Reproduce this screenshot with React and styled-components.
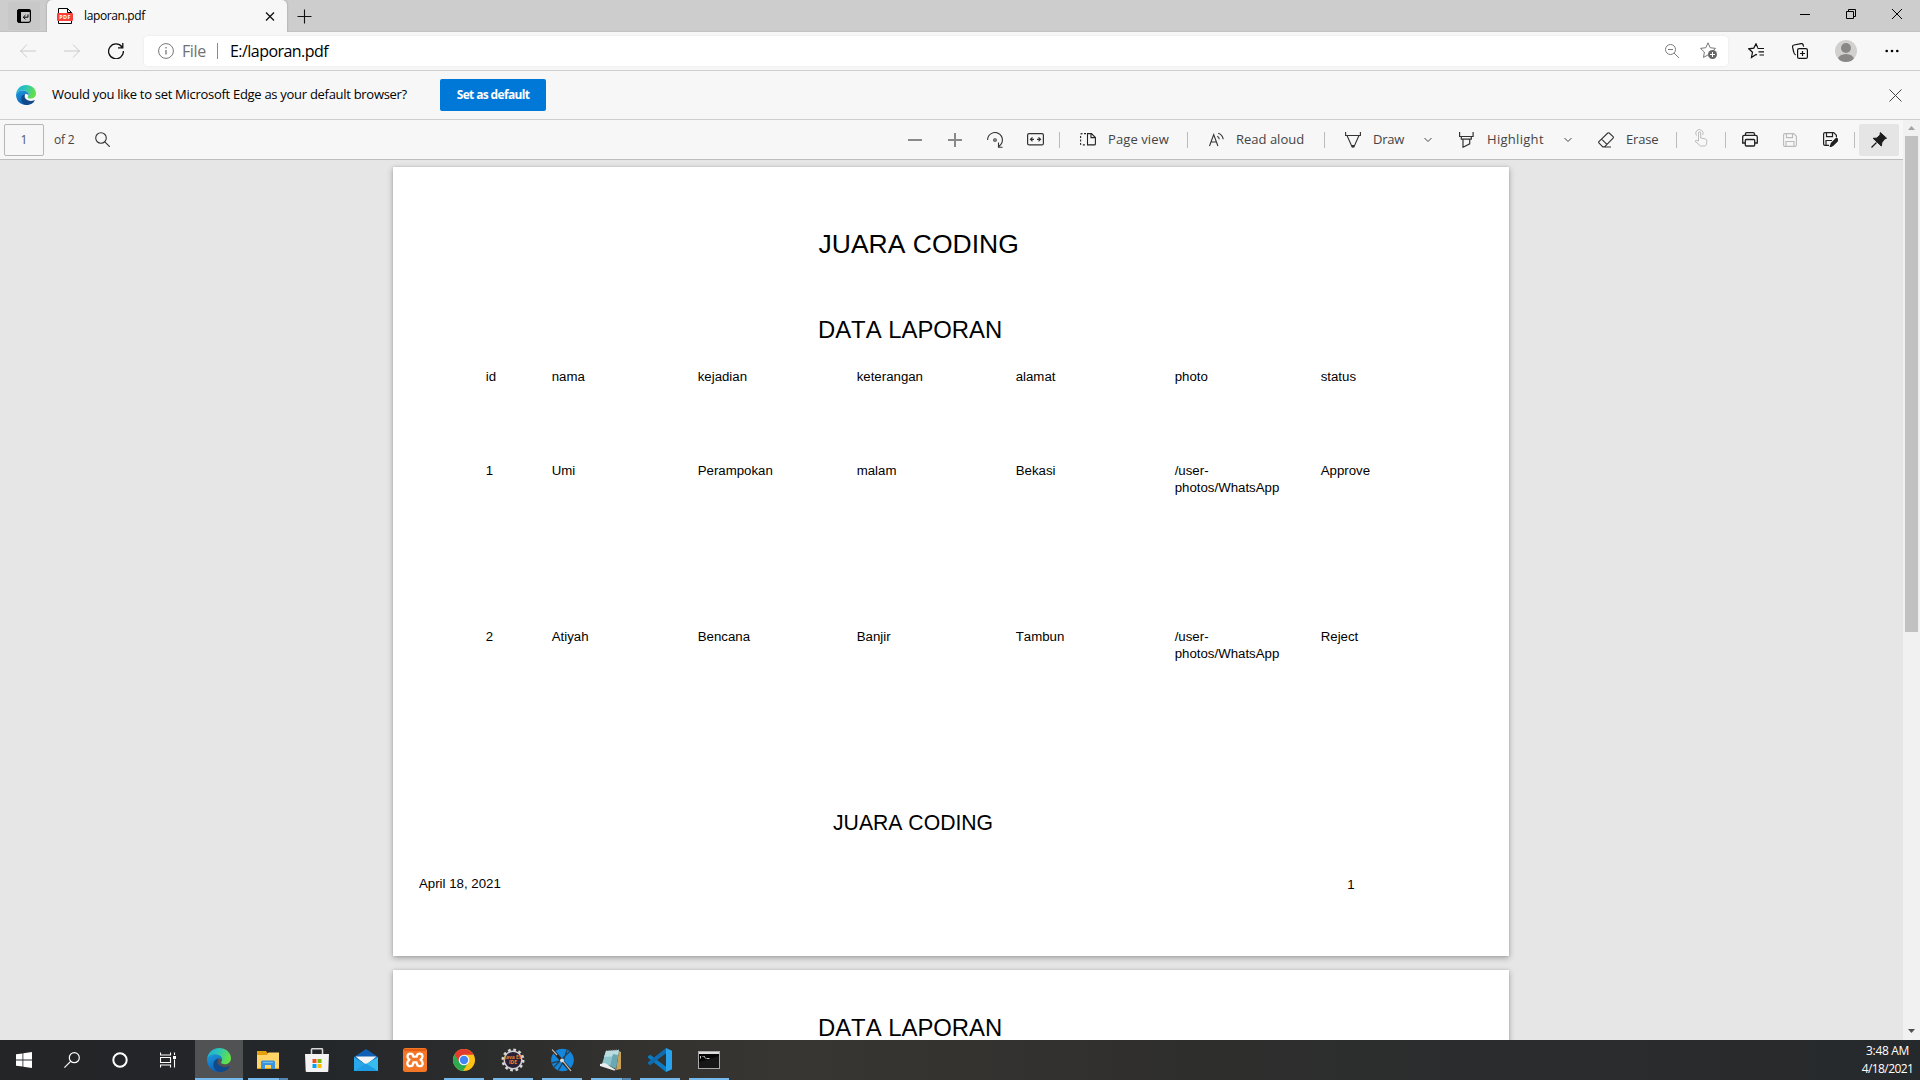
import React from "react";
import styled, { createGlobalStyle } from "styled-components";

const Global = createGlobalStyle`
  * { box-sizing: border-box; }
  html, body { margin: 0; padding: 0; overflow: hidden; }
  body { font-family: "Open Sans", "Noto Sans", sans-serif; color: #000; background: #e6e6e6; }
  svg { display: block; flex: none; }
`;

const Screen = styled.div`
  width: 1920px;
  height: 1080px;
  display: flex;
  flex-direction: column;
  overflow: hidden;
`;

const Spacer = styled.div`
  flex: 1;
`;

const Label = styled.span`
  display: block;
  flex: none;
  white-space: nowrap;
  width: ${(p) => (p.$w ? `${p.$w}px` : "auto")};
  margin-bottom: ${(p) => p.$lift || 0}px;
  font-size: ${(p) => p.$size || 13}px;
  line-height: 20px;
  letter-spacing: ${(p) => p.$ls || 0}px;
  color: ${(p) => p.$color || "#000"};
`;

const Cell = styled.div`
  width: ${(p) => p.$w}px;
  height: ${(p) => (p.$h ? `${p.$h}px` : "100%")};
  flex: none;
  display: flex;
  align-items: center;
  justify-content: center;
`;

/* Tab strip */
const TabStrip = styled.div`
  height: 32px;
  flex: none;
  display: flex;
  background: #cdcdcd;
  box-shadow: inset 0 -1px 0 #c2c2c2;
`;
const TabActions = styled.div`
  width: 32px;
  height: 28px;
  margin: 2px 7px 0 8px;
  border-radius: 3px;
  background: #c8c8c8;
  display: flex;
  align-items: center;
  justify-content: center;
`;
const Tab = styled.div`
  width: 240px;
  height: 32px;
  padding: 0 9px 0 10px;
  border-radius: 5px 5px 0 0;
  background: #f7f7f7;
  box-shadow: 0 0 2px rgba(0, 0, 0, 0.3);
  display: flex;
  align-items: center;
`;
const PdfBadge = styled.div`
  width: 16px;
  height: 16px;
  margin-right: 11px;
  display: grid;
  place-items: center;
  & > * { grid-area: 1 / 1; }
`;
const PdfBadgeText = styled.span`
  padding-top: 2px;
  font: 700 5.4px/8px "Open Sans", sans-serif;
  letter-spacing: 0.4px;
  color: #fff;
`;

/* Navigation bar */
const NavBar = styled.div`
  height: 39px;
  flex: none;
  display: flex;
  align-items: center;
  padding: 0 5px 1px 6px;
  background: #f7f7f7;
  border-bottom: 1px solid #cecece;
`;
const AddressBar = styled.div`
  width: 1584px;
  height: 30px;
  margin: 0 6px 0 6px;
  padding: 0 1px 0 14px;
  border-radius: 4px;
  background: #fff;
  box-shadow: 0 0 3px rgba(0, 0, 0, 0.07);
  display: flex;
  align-items: center;
`;
const UrlDivider = styled.div`
  width: 1px;
  height: 16px;
  margin: 0 12px 0 10px;
  background: #8a8a8a;
`;

/* Notification bar */
const InfoBar = styled.div`
  height: 49px;
  flex: none;
  display: flex;
  align-items: center;
  padding: 0 18px 0 16px;
  background: #f7f7f7;
  border-bottom: 1px solid #cecece;
`;
const InfoText = styled.div`
  width: 388px;
  margin-left: 16px;
`;
const PrimaryButton = styled.button`
  width: 106px;
  height: 32px;
  padding: 0;
  border: 0;
  border-radius: 2px;
  background: #0078d7;
  color: #fff;
  font: 700 12px/20px "Open Sans", sans-serif;
  letter-spacing: -0.65px;
`;

/* PDF viewer */
const Viewer = styled.div`
  flex: 1;
  min-height: 0;
  display: flex;
`;
const ViewerMain = styled.div`
  width: 1903px;
  display: flex;
  flex-direction: column;
  min-height: 0;
`;
const PdfBar = styled.div`
  height: 40px;
  flex: none;
  display: flex;
  align-items: center;
  padding: 0 4px;
  background: #f7f7f7;
  border-bottom: 1px solid #bdbdbd;
`;
const PageInput = styled.div`
  width: 40px;
  height: 32px;
  margin-right: 10px;
  border: 1px solid #b5b5b5;
  border-radius: 2px;
  display: flex;
  align-items: center;
  justify-content: center;
`;
const Divider = styled.div`
  width: 1px;
  height: 16px;
  margin: 0 4px;
  background: #bcbcbc;
`;
const ToolButton = styled.div`
  width: ${(p) => p.$w}px;
  padding-left: 16px;
  display: flex;
  align-items: center;
  gap: 12px;
`;
const Chevron = styled.div`
  width: ${(p) => p.$w}px;
  padding-left: 16px;
`;
const PinButton = styled.div`
  width: 40px;
  height: 32px;
  border-radius: 2px;
  background: #e5e5e5;
  display: flex;
  align-items: center;
  justify-content: center;
`;
const Canvas = styled.div`
  flex: 1;
  min-height: 0;
  overflow: hidden;
  padding: 7px 0 0 393px;
  background: #e6e6e6;
`;
const Page = styled.div`
  width: 1116px;
  height: 789px;
  margin-bottom: 14px;
  padding-top: ${(p) => p.$top}px;
  background: #fff;
  box-shadow: 0 2px 6px rgba(0, 0, 0, 0.3), 0 0 2px rgba(0, 0, 0, 0.12);
  font-family: "Liberation Sans", Arial, sans-serif;
  font-kerning: none;
`;
const Heading = styled.div`
  font-size: ${(p) => p.$size}px;
  line-height: ${(p) => p.$lh}px;
  padding-left: ${(p) => p.$left}px;
  margin-bottom: ${(p) => p.$gap || 0}px;
`;
const Row = styled.div`
  height: ${(p) => p.$h}px;
  padding-left: 92.7px;
  display: grid;
  grid-template-columns: 66px 146px 159px 159px 159px 146px 120px;
  font-size: 13.25px;
  line-height: 17px;
`;
const PageFooter = styled.div`
  display: flex;
  justify-content: space-between;
  padding: 0 154.5px 0 26px;
  font-size: 13.25px;
  line-height: 17px;
`;
const PageNumber = styled.span`
  padding-top: 1px;
`;

/* Scrollbar */
const Scrollbar = styled.div`
  width: 17px;
  background: #f1f1f1;
  display: flex;
  flex-direction: column;
  align-items: center;
`;
const Thumb = styled.div`
  width: 13px;
  height: 496px;
  background: #c1c1c1;
`;

/* Taskbar */
const Taskbar = styled.div`
  height: 40px;
  flex: none;
  display: flex;
  background: linear-gradient(90deg, #232527 0, #24272a 330px, #33322f 640px, #383632 800px, #2e2e2d 1200px, #292b2d 1700px, #26292b 1920px);
`;
const TaskGroup = styled.div`
  display: flex;
  gap: 1px;
  margin-left: 3px;
`;
const TaskItem = styled.div`
  width: 48px;
  height: 40px;
  display: flex;
  flex-direction: column;
  align-items: center;
  background: ${(p) => (p.$active ? "#505254" : "transparent")};
`;
const TaskIcon = styled.div`
  height: 38px;
  padding-top: 2px;
  display: flex;
  align-items: center;
`;
const Underline = styled.div`
  width: ${(p) => (p.$active ? 48 : 40)}px;
  height: 2px;
  background: ${(p) => (p.$stack ? "linear-gradient(90deg, #76b9ed 31px, #3f5f78 31px, #5687b0 32px)" : "#76b9ed")};
`;
const Clock = styled.div`
  width: 65px;
  padding-top: 2px;
  display: flex;
  flex-direction: column;
  align-items: center;
  font-size: 12px;
  line-height: 18px;
  color: #fff;
`;
const ClockLine = styled.span`
  letter-spacing: ${(p) => p.$ls}px;
`;

const Svg = ({ w = 16, h = w, c = "#222", sw = 1, children }) => (
  <svg width={w} height={h} viewBox={`0 0 ${w} ${h}`} fill="none" stroke={c} strokeWidth={sw}>
    {children}
  </svg>
);

const SmallChevron = () => (
  <Svg w={8} h={6} c="#444">
    <path d="M.5 1l3.500 3.500L7.500 1" />
  </Svg>
);

const EdgeLogo = ({ size, id }) => (
  <svg width={size} height={size} viewBox="0 0 24 24">
    <defs>
      <linearGradient id={`${id}a`} x1="0" y1="0" x2="1" y2=".3">
        <stop offset="0" stopColor="#1ca8dc" />
        <stop offset=".5" stopColor="#2cc5b8" />
        <stop offset="1" stopColor="#62e04a" />
      </linearGradient>
      <linearGradient id={`${id}b`} x1="0" y1="0" x2=".5" y2="1">
        <stop offset="0" stopColor="#1b9de2" />
        <stop offset="1" stopColor="#0f5cb0" />
      </linearGradient>
    </defs>
    <path d="M0 11.500C.6 5 5.500 0 12 0c7 0 12 4.900 12 10.200 0 4-3.200 6-6.300 6-2.600 0-3.700-.9-3.700-1.600 0-.6 1.100-1.200 1.100-3 0-2.600-3-4.900-6.900-4.900C4 6.700 1 8.500 0 11.500z" fill={`url(#${id}a)`} />
    <path d="M0 11.500c1-3.300 4.200-4.900 7.800-4.900 4.200 0 7.300 2.200 7.300 5 0 .5-.1.900-.2 1.200-.6-1.300-1.900-2.300-3.400-2.300-1.700 0-3 1.900-3 4.400 0 4.400 3.700 7.200 7.400 8.400-1.200.5-2.500.7-3.900.7C5 24 0 18.600 0 11.500z" fill={`url(#${id}b)`} />
    <path d="M11.500 10.500c-3.300.6-5.200 3-5.200 6 0 3.700 2.700 7.300 7.500 7.400 3.700-.1 6.900-2.100 8.600-5 .3-.5-.1-.8-.6-.6-1.200.6-2.600.8-4 .8-4.200 0-7.400-2.500-7.400-5.500 0-1.400.5-2.400 1.100-3.100z" fill="#114a8b" />
  </svg>
);

const taskIcons = {
  explorer: (
    <svg width="22" height="20" viewBox="0 0 22 20">
      <path d="M0 1h9l1.500 2H22v16H0z" fill="#e2a00c" />
      <path d="M0 5h10l1.500-2.500H22V18H0z" fill="#ffd567" />
      <path d="M4 19v-6.500c0-1.400.8-2 2-2h10c1.200 0 2 .6 2 2V19h-4v-4H8v4z" fill="#3b93dc" />
      <path d="M6 12h10v1H6z" fill="#74bdf0" />
    </svg>
  ),
  store: (
    <svg width="24" height="24" viewBox="0 0 24 24">
      <path d="M6.500 7V1.500q0-.7.7-.7h9.600q.7 0 .7.700V7" fill="none" stroke="#d8d8d8" strokeWidth="1.500" />
      <path d="M0 6h24l-.7 17.200q0 .8-1 .8H1.700q-1 0-1-.8z" fill="#f3f3f3" />
      <path d="M7.500 11h4v4h-4z" fill="#f25022" />
      <path d="M12.500 11h4v4h-4z" fill="#7fba00" />
      <path d="M7.500 16h4v4h-4z" fill="#00a4ef" />
      <path d="M12.500 16h4v4h-4z" fill="#ffb900" />
    </svg>
  ),
  mail: (
    <svg width="24" height="22" viewBox="0 0 24 22">
      <path d="M0 8l12-8 12 8v4H0z" fill="#0f5fb4" />
      <path d="M1.500 7.500h21L12 16z" fill="#f4f4f4" />
      <path d="M0 8l12 7.500V22H0z" fill="#28a8ea" />
      <path d="M24 8v14H0l12-7z" fill="#35bdf0" />
      <path d="M24 22H0l12-7.500z" fill="#1e9de4" />
    </svg>
  ),
  xampp: (
    <svg width="24" height="24" viewBox="0 0 24 24">
      <rect width="24" height="24" rx="2.500" fill="#f37726" />
      <path d="M1 1h22v2H1z" fill="#e25f14" />
      <path
        d="M10.200 8.700C10.200 6.200 8.800 5.600 7.400 5.600 5.600 5.600 4.500 6.800 4.500 8.500c0 1.600.9 2.500 2 3.200-1.300.8-2.200 1.800-2.200 3.500 0 1.800 1.200 3 3 3 1.900 0 2.900-1.200 2.900-3.400M13.800 8.700c0-2.500 1.400-3.100 2.800-3.100 1.800 0 2.900 1.200 2.900 2.900 0 1.600-.9 2.500-2 3.200 1.300.8 2.200 1.800 2.200 3.500 0 1.800-1.200 3-3 3-1.900 0-2.900-1.200-2.900-3.400M9.500 8.700h5M9.500 14.300h5"
        fill="none"
        stroke="#fff"
        strokeWidth="2.300"
        strokeLinejoin="round"
      />
    </svg>
  ),
  chrome: (
    <svg width="22" height="22" viewBox="0 0 22 22">
      <circle cx="11" cy="11" r="11" fill="#fbc116" />
      <path d="M1.500 5.500A11 11 0 0 1 20.600 5.700H11L6 13.500z" fill="#e33b2e" />
      <path d="M1.500 5.500A11 11 0 0 0 10 22l4.700-7.500-3.700 1-5-3z" fill="#2da94f" />
      <circle cx="11" cy="11" r="5.300" fill="#fff" />
      <circle cx="11" cy="11" r="4.200" fill="#4285f4" />
    </svg>
  ),
  draw: (
    <svg width="24" height="24" viewBox="0 0 24 24">
      <circle cx="12.500" cy="12" r="11.300" fill="#1487dc" />
      <path d="M3 20L20 3M8 23l5-9 4-12M2 15l12-3" stroke="#24445c" strokeWidth="1.300" fill="none" />
      <path d="M2 1.500L21 23" stroke="#2b2522" strokeWidth="3.200" />
      <path d="M2 1.500l5 5.500M12 12l9 11" stroke="#b9b5b0" strokeWidth="1.200" />
      <circle cx="12" cy="12.500" r="2" fill="#ddd" />
    </svg>
  ),
  notepad: (
    <svg width="24" height="22" viewBox="0 0 24 22">
      <path d="M20 2l2 1v17l-5 1z" fill="#c9a25a" />
      <path d="M7 2l13-1-3 17-14-3z" fill="#8ec6cd" />
      <path d="M7 2l13-1-1 6-14 1z" fill="#b9dde0" />
      <path d="M1 15l5-1 11 7-2 .5L1 17z" fill="#e8eeee" />
      <path d="M14 5l5 1-2 14-6-3z" fill="#6aa9b3" />
      <path d="M7 1.500l13-.8" stroke="#777" strokeDasharray="1 1" />
    </svg>
  ),
  vscode: (
    <svg width="24" height="24" viewBox="0 0 24 24">
      <path d="M0 8.300L2.200 6.800 18 18.800V24L0 9.800z" fill="#0b7cc4" />
      <path d="M0 15.700l2.200 1.500L18 5.200V0L0 14.200z" fill="#0f6cb0" />
      <path d="M18 0l6 2.700v18.600L18 24z" fill="#28a4ee" />
    </svg>
  ),
  cmd: (
    <svg width="22" height="18" viewBox="0 0 22 18">
      <rect x=".5" y=".5" width="21" height="17" fill="#060606" stroke="#aaa" />
      <path d="M1 1h20v2H1z" fill="#ddd" />
      <path d="M1 11L21 5v12H1z" fill="#fff" opacity=".07" />
      <path d="M2.500 5v2.500M4.500 5.500h1M6 5l1.500 2.500M8.500 7.500h3" stroke="#ddd" strokeWidth=".9" />
    </svg>
  ),
};

const GearBox = styled.div`
  width: 24px;
  height: 24px;
  display: grid;
  place-items: center;
  & > * { grid-area: 1 / 1; }
`;
const GearText = styled.span`
  font: 700 5px/5px "Open Sans", sans-serif;
  color: #f0872a;
  text-align: center;
  white-space: nowrap;
`;
const Gear = () => (
  <GearBox>
    <svg width="24" height="24" viewBox="0 0 24 24">
      <circle cx="12" cy="12" r="10.200" fill="none" stroke="#d8d8d8" strokeWidth="2.600" strokeDasharray="2.700 2.640" />
      <circle cx="12" cy="12" r="8.800" fill="#2b2038" stroke="#cfcfcf" strokeWidth="1.500" />
    </svg>
    <GearText>Java EE<br />IDE</GearText>
  </GearBox>
);

const running = [
  { key: "edge", icon: <EdgeLogo size={24} id="task" />, active: true, line: true },
  { key: "explorer", icon: taskIcons.explorer, line: true, stack: true },
  { key: "store", icon: taskIcons.store },
  { key: "mail", icon: taskIcons.mail },
  { key: "xampp", icon: taskIcons.xampp },
  { key: "chrome", icon: taskIcons.chrome, line: true },
  { key: "gear", icon: <Gear />, line: true },
  { key: "draw", icon: taskIcons.draw, line: true },
  { key: "notepad", icon: taskIcons.notepad, line: true, stack: true },
  { key: "vscode", icon: taskIcons.vscode, line: true },
  { key: "cmd", icon: taskIcons.cmd, line: true },
];

const rows = [
  { h: 94, cells: ["id", "nama", "kejadian", "keterangan", "alamat", "photo", "status"] },
  { h: 166, cells: ["1", "Umi", "Perampokan", "malam", "Bekasi", ["/user-", "photos/WhatsApp"], "Approve"] },
  { h: 183, cells: ["2", "Atiyah", "Bencana", "Banjir", "Tambun", ["/user-", "photos/WhatsApp"], "Reject"] },
];

const CellText = ({ value }) => (
  <div>{Array.isArray(value) ? value.map((line) => <div key={line}>{line}</div>) : value}</div>
);

export default function App() {
  return (
    <Screen>
      <Global />
      <TabStrip>
        <TabActions>
          <Svg w={14} c="#000">
            <rect x=".6" y=".6" width="12.800" height="12.800" rx="1.800" strokeWidth="1.200" />
            <path d="M1 1h2.500v12H1zM1 1h12v1.500H1z" fill="#000" />
            <path d="M11 5.500v2.700H6.500M8.500 6L6.300 8.200l2.200 2.200" />
          </Svg>
        </TabActions>
        <Tab>
          <PdfBadge>
            <Svg w={16}>
              <path d="M1.500 5V.5h9l4 4V15.500h-13V5M10.500.5v4h4" stroke="#000" fill="#fff" />
              <rect x="0" y="5" width="16" height="8" rx="1" fill="#f8403c" stroke="none" />
            </Svg>
            <PdfBadgeText>PDF</PdfBadgeText>
          </PdfBadge>
          <Label $size={12} $ls={-0.38}>laporan.pdf</Label>
          <Spacer />
          <Svg w={16} c="#111" sw={1.3}>
            <path d="M4 4.500l8 8M12 4.500l-8 8" />
          </Svg>
        </Tab>
        <Cell $w={35}>
          <Svg w={15} c="#111" sw={1.1}>
            <path d="M7.500 .5v14M.5 7.500h14" />
          </Svg>
        </Cell>
        <Spacer />
        <Cell $w={46} $h={28}>
          <Svg w={10} c="#000"><path d="M0 5.500h10" /></Svg>
        </Cell>
        <Cell $w={46} $h={28}>
          <Svg w={10} c="#000"><path d="M.5 2.500h7v7h-7zM2.500 2.500v-2h7v7h-2" /></Svg>
        </Cell>
        <Cell $w={46} $h={28}>
          <Svg w={10} c="#000"><path d="M0 0l10 10M10 0L0 10" /></Svg>
        </Cell>
      </TabStrip>

      <NavBar>
        <Cell $w={44}>
          <Svg w={16} c="#cacaca"><path d="M0 8h16M7 1.500L.7 8 7 14.500" /></Svg>
        </Cell>
        <Cell $w={44}>
          <Svg w={16} c="#cacaca"><path d="M0 8h16M9 1.500L15.300 8 9 14.500" /></Svg>
        </Cell>
        <Cell $w={44}>
          <Svg w={16} c="#111" sw={1.3}>
            <path d="M14 4A7.400 7.400 0 1 0 15.400 8M14.800 0v4.800H10" />
          </Svg>
        </Cell>
        <AddressBar>
          <Svg w={16} c="#777">
            <circle cx="8" cy="8" r="7.400" />
            <path d="M8 7v4.500M8 4v1.500" strokeWidth="1.300" />
          </Svg>
          <Cell $w={8} />
          <Label $size={16} $w={25} $ls={-0.4} $color="#717171">File</Label>
          <UrlDivider />
          <Label $size={16} $ls={-0.55}>E:/laporan.pdf</Label>
          <Spacer />
          <Cell $w={36}>
            <Svg w={14} c="#7b7b7b">
              <circle cx="5.500" cy="5.500" r="5" />
              <path d="M9 9l5 5M3 5.500h5" />
            </Svg>
          </Cell>
          <Cell $w={37}>
            <Svg w={18} h={18} c="#777">
              <path d="M8 .8l2.200 4.900 5.300.7-2.500 2.400M8 .8L5.800 5.700l-5.300.7 3.900 3.700-.9 5.300L8 12.900" />
              <circle cx="12.500" cy="12.500" r="4.500" fill="#666" stroke="none" />
              <path d="M12.500 10v5M10 12.500h5" stroke="#fff" />
            </Svg>
          </Cell>
        </AddressBar>
        <Cell $w={44}>
          <Svg w={17} h={16} c="#111" sw={1.2}>
            <path d="M9.500 5.500H16M10.500 8.800H16M11.500 12H16M9 12l-1-.6-4.500 3 1-5.200L.8 5.800l5-.7L8 .8l1.800 4" />
          </Svg>
        </Cell>
        <Cell $w={44}>
          <Svg w={16} c="#111" sw={1.2}>
            <rect x="5.600" y="5.600" width="9.800" height="9.800" rx="1.500" />
            <path d="M10.500 8v5M8 10.500h5M3.800 12C2.500 11.500 2 10.500 1.700 9L.6 4.200C.4 3 .8 2.200 2 2l7-1.400c1.200-.2 2 .3 2.200 1.500l.4 1.500" />
          </Svg>
        </Cell>
        <Cell $w={47}>
          <svg width="22" height="22" viewBox="0 0 22 22">
            <defs><clipPath id="avatar"><circle cx="11" cy="11" r="11" /></clipPath></defs>
            <g clipPath="url(#avatar)">
              <rect width="22" height="22" fill="#d2d0ce" />
              <circle cx="11" cy="8" r="5" fill="#8a8886" />
              <ellipse cx="11" cy="19.500" rx="8" ry="5.500" fill="#8a8886" />
            </g>
          </svg>
        </Cell>
        <Cell $w={46}>
          <svg width="14" height="4" viewBox="0 0 14 4">
            <circle cx="1.700" cy="2" r="1.300" /><circle cx="7" cy="2" r="1.300" /><circle cx="12.300" cy="2" r="1.300" />
          </svg>
        </Cell>
      </NavBar>

      <InfoBar>
        <EdgeLogo size={20} id="info" />
        <InfoText>
          <Label $size={13} $lift={2} $ls={-0.29}>Would you like to set Microsoft Edge as your default browser?</Label>
        </InfoText>
        <PrimaryButton>Set as default</PrimaryButton>
        <Spacer />
        <Svg w={13} c="#444"><path d="M.5 .5l12 12M12.500 .5l-12 12" /></Svg>
      </InfoBar>

      <Viewer>
        <ViewerMain>
          <PdfBar>
            <PageInput><Label $size={12} $color="#555">1</Label></PageInput>
            <Label $size={12} $w={31} $ls={-0.2} $color="#444">of 2</Label>
            <Cell $w={34} $h={36}>
              <Svg w={15} c="#333" sw={1.1}>
                <circle cx="6" cy="6" r="5.300" />
                <path d="M9.800 9.800l5 5" />
              </Svg>
            </Cell>
            <Spacer />
            <Cell $w={40}><Svg w={14} c="#8a8a8a" sw={2}><path d="M0 7h14" /></Svg></Cell>
            <Cell $w={40}><Svg w={14} c="#8a8a8a" sw={2}><path d="M0 7h14M7 0v14" /></Svg></Cell>
            <Cell $w={40}>
              <Svg w={16} c="#333" sw={1.1}>
                <path d="M.6 8A7.400 7.400 0 1 1 12 14.200M11.500 10.500v4.700h4" />
                <circle cx="8" cy="8" r="1.300" />
              </Svg>
            </Cell>
            <Cell $w={40}>
              <Svg w={17} h={13} c="#333" sw={1.2}>
                <rect x=".6" y=".6" width="15.800" height="11.300" rx="1.500" />
                <path d="M3.500 6.300H7M10 6.300h3.500M5.500 4.300l-2 2 2 2M11.500 4.300l2 2-2 2" />
              </Svg>
            </Cell>
            <Divider />
            <ToolButton $w={119}>
              <Svg w={16} h={13} c="#222" sw={1.1}>
                <path d="M7.500 .6h4L15.400 4.500v6.400q0 1-1 1H7.500zM11 .6v4h4.400" />
                <path d="M6 .6H2Q.6.600.6 2v9q0 .9 1.300.9H6" strokeDasharray="2 1.500" />
              </Svg>
              <Label $color="#444" $lift={2} $ls={0.1}>Page view</Label>
            </ToolButton>
            <Divider />
            <ToolButton $w={128}>
              <Svg w={16} h={15} c="#333" sw={1.1}>
                <path d="M1.500 14L5.700 2.500 9.900 14M3 10h5.500M9.300 4.200q1.800 1 2 3M10.200 1.200q4.400 1.500 5 6" />
              </Svg>
              <Label $color="#444" $lift={2}>Read aloud</Label>
            </ToolButton>
            <Divider />
            <ToolButton $w={79}>
              <Svg w={16} c="#333" sw={1.1}>
                <path d="M.6 0v3.500h14.800V0M2 3.500l5 11.200h2l5-11.200" />
                <path d="M6.800 13h2.400v2.500H6.800z" fill="#333" stroke="none" />
              </Svg>
              <Label $color="#444" $lift={2} $ls={-0.2}>Draw</Label>
            </ToolButton>
            <Chevron $w={35}><SmallChevron /></Chevron>
            <ToolButton $w={105}>
              <Svg w={16} c="#333" sw={1.2}>
                <path d="M.6 0v4.500h13.500V0M2.300 4.500v2.700h10V4.500M4 7.200v8l6.700-3.300V7.200" />
              </Svg>
              <Label $color="#444" $lift={2} $ls={0.3}>Highlight</Label>
            </ToolButton>
            <Chevron $w={34}><SmallChevron /></Chevron>
            <ToolButton $w={90}>
              <Svg w={16} c="#333" sw={1.1}>
                <path d="M.9 9.600L9.800 1q.7-.6 1.400 0l3.900 3.700q.7.700 0 1.400L6.500 14.900H4.800L.9 11q-.6-.7 0-1.400zM3.600 7.200l5.300 5.200M5 15h8" />
              </Svg>
              <Label $color="#444" $lift={2} $ls={-0.2}>Erase</Label>
            </ToolButton>
            <Divider />
            <Cell $w={40} $h={36}>
              <Svg w={14} h={22} c="#bdbdbd">
                <path d="M4.500 12V4q0-1.200 1.100-1.200T6.700 4v5l4.800 1q1.500.4 1.400 2l-.6 3.500q-.4 1.500-1.500 1.500H6.500L1 12.200q.5-1.600 3.500-.2M2.500 6.500A3.700 3.700 0 1 1 8.700 6" />
              </Svg>
            </Cell>
            <Divider />
            <Cell $w={40}>
              <Svg w={16} h={15} c="#222" sw={1.3}>
                <path d="M3.500 3V2q0-1.300 1.300-1.300h6.400q1.300 0 1.300 1.300v1M3 11H.7V5q0-1.700 1.700-1.700h11.200q1.700 0 1.700 1.700v6H13" />
                <rect x="3.300" y="7.500" width="9.400" height="6.500" rx="1" />
              </Svg>
            </Cell>
            <Cell $w={40}>
              <Svg w={14} c="#bbb" sw={1.1}>
                <path d="M.6 2q0-1.400 1.400-1.400h8.700l2.700 2.700V12q0 1.400-1.400 1.400H2Q.6 13.400.6 12zM3.500.6v4h6v-4M3 13.400V8.500h8v4.900" />
              </Svg>
            </Cell>
            <Cell $w={40}>
              <Svg w={15} h={15} c="#222" sw={1.2}>
                <path d="M6 13.400H2Q.6 13.400.6 12V2Q.6.600 2 .6h8.700l2.700 2.700V5M3.500.6v4h6v-4M3 13.400V8.500h6" />
                <path d="M7.500 14.500l1-3 5-5 1.500 1.500-5 5z" fill="#222" strokeWidth="1.600" />
              </Svg>
            </Cell>
            <Divider />
            <PinButton>
              <Svg w={16} c="#1c1c1c">
                <path d="M9.300.5l6.200 5.700-2 .8-2.600 3.600-.6 3.400-8.200-7.700 3.600-.2L9.100 3z" fill="#1c1c1c" />
                <path d="M5.500 10.500L.5 15.500" strokeWidth="1.300" />
              </Svg>
            </PinButton>
          </PdfBar>

          <Canvas>
            <Page $top={62}>
              <Heading $size={26.5} $lh={30} $gap={57} $left={425.5}>JUARA CODING</Heading>
              <Heading $size={23.85} $lh={28} $gap={24} $left={425}>DATA LAPORAN</Heading>
              {rows.map((row) => (
                <Row key={row.cells[0]} $h={row.h}>
                  {row.cells.map((value, i) => <CellText key={i} value={value} />)}
                </Row>
              ))}
              <Heading $size={21.2} $lh={24} $gap={40} $left={440}>JUARA CODING</Heading>
              <PageFooter>
                <span>April 18, 2021</span>
                <PageNumber>1</PageNumber>
              </PageFooter>
            </Page>
            <Page $top={44}>
              <Heading $size={23.85} $lh={28} $left={425}>DATA LAPORAN</Heading>
            </Page>
          </Canvas>
        </ViewerMain>
        <Scrollbar>
          <Cell $w={17} $h={16}>
            <svg width="7" height="4" viewBox="0 0 7 4"><path d="M0 4L3.500 0 7 4z" fill="#a3a3a3" /></svg>
          </Cell>
          <Thumb />
          <Spacer />
          <Cell $w={17} $h={18}>
            <svg width="7" height="4" viewBox="0 0 7 4"><path d="M0 0l3.500 4L7 0z" fill="#505050" /></svg>
          </Cell>
        </Scrollbar>
      </Viewer>

      <Taskbar>
        <TaskItem><TaskIcon>
          <svg width="16" height="16" viewBox="0 0 16 16" fill="#fff">
            <path d="M0 2.300l6.500-.9v6.100H0zM7.300 1.300L16 0v7.500H7.300zM0 8.400h6.500v6.200L0 13.700zM7.300 8.400H16V16l-8.700-1.300z" />
          </svg>
        </TaskIcon></TaskItem>
        <TaskItem><TaskIcon>
          <Svg w={16} c="#fff" sw={1.2}><circle cx="10.300" cy="5.700" r="5" /><path d="M6.600 9.400L.4 15.600" /></Svg>
        </TaskIcon></TaskItem>
        <TaskItem><TaskIcon>
          <Svg w={16} c="#fff" sw={2}><circle cx="8" cy="8" r="6.700" /></Svg>
        </TaskIcon></TaskItem>
        <TaskItem><TaskIcon>
          <Svg w={16} c="#fff" sw={1.1}>
            <path d="M.5 .5v2.500h10V.5M.5 5.500h10v5H.5zM.5 15.500V13h10v2.500M14.500 .5v2.500M14.500 7.500v8" />
            <path d="M13 4h3v3h-3z" fill="#fff" stroke="none" />
          </Svg>
        </TaskIcon></TaskItem>
        <TaskGroup>
          {running.map((item) => (
            <TaskItem key={item.key} $active={item.active}>
              <TaskIcon>{item.icon}</TaskIcon>
              {item.line && <Underline $active={item.active} $stack={item.stack} />}
            </TaskItem>
          ))}
        </TaskGroup>
        <Spacer />
        <Clock>
          <ClockLine $ls={-0.35}>3:48 AM</ClockLine>
          <ClockLine $ls={-0.6}>4/18/2021</ClockLine>
        </Clock>
      </Taskbar>
    </Screen>
  );
}
